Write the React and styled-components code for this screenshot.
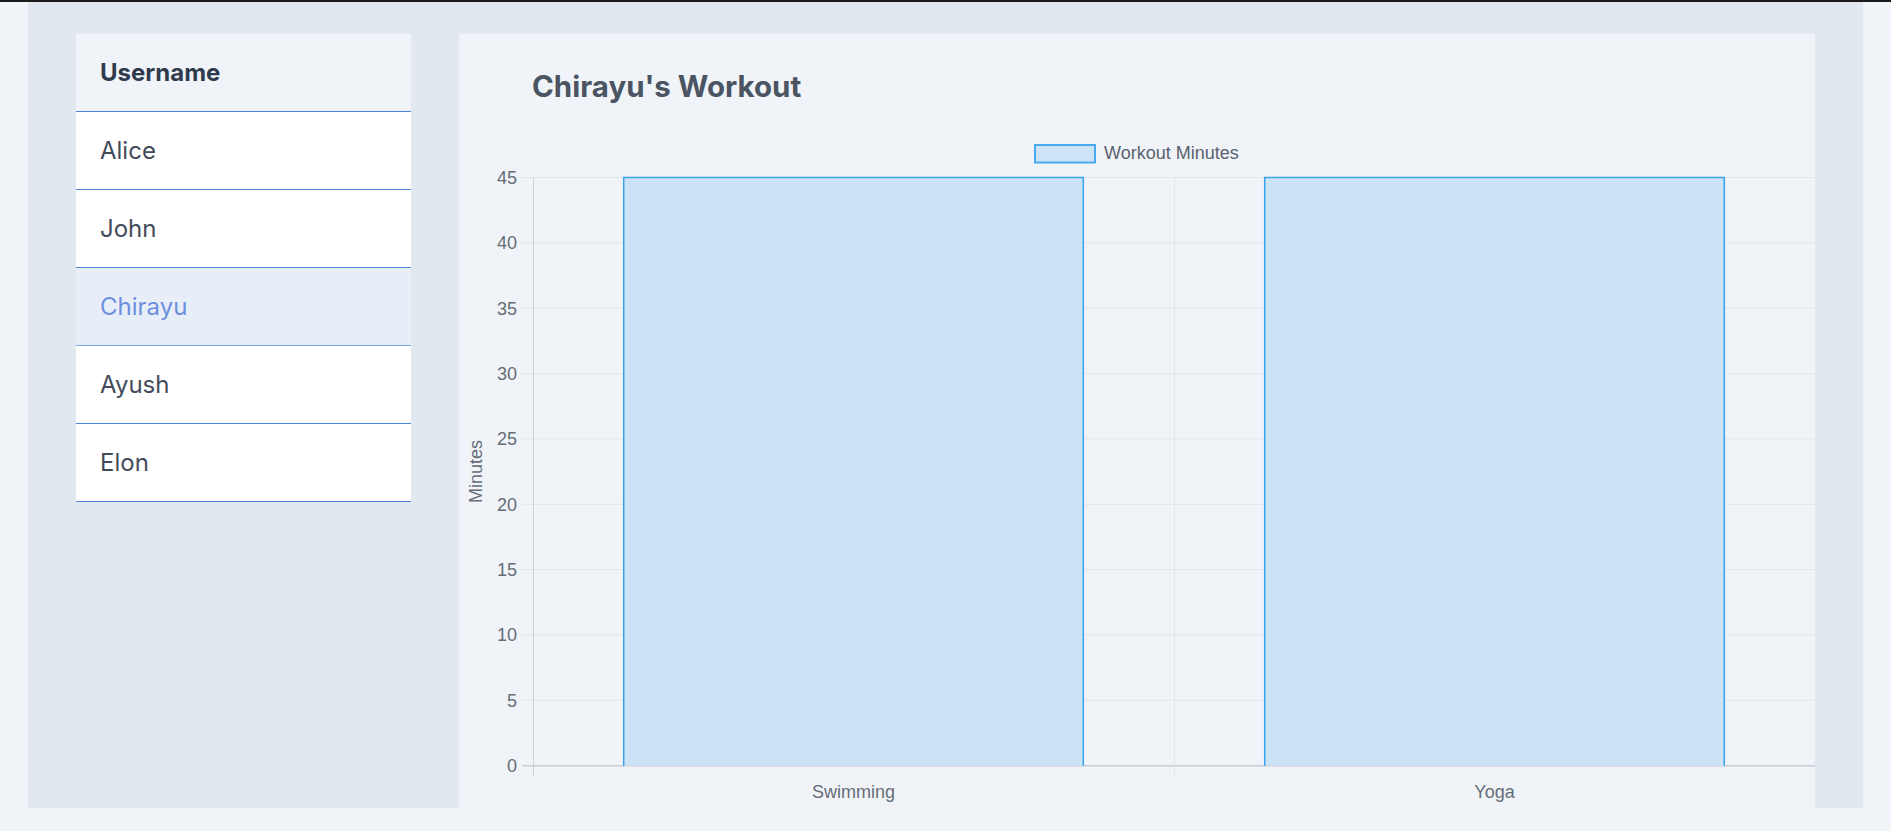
import styled, { createGlobalStyle } from 'styled-components'

const GlobalStyle = createGlobalStyle`
  html {
    border-top: 2px solid #1b1b1b;
  }
  body {
    margin: 0;
    background: #f0f4f8;
    font-family: Inter, 'Noto Sans', sans-serif;
  }
`

const Page = styled.div`
  padding: 0 28px;
`
const Container = styled.div`
  box-sizing: border-box;
  height: 97vh;
  background: #e2e8f0;
  padding: 32px 48px;
  display: flex;
  align-items: flex-start;
  gap: 48px;
`
const Sidebar = styled.div`
  width: 335px;
  flex: none;
  display: flex;
  flex-direction: column;
`
const HeaderRow = styled.div`
  padding: 24px;
  background: #f0f4f8;
  border-bottom: 1px solid #4a84dd;
  font-size: 24px;
  font-weight: 700;
  color: #2f3a4c;
`
const UserRow = styled.div`
  padding: 24px;
  background: ${(props) => (props.active ? '#e8eef8' : '#ffffff')};
  border-bottom: 1px solid ${(props) => (props.active ? '#7ba3ea' : '#4a84dd')};
  font-size: 24px;
  color: ${(props) => (props.active ? '#6d8fdf' : '#434b5a')};
  cursor: pointer;
`
const ChartCard = styled.div`
  flex: 1;
  min-width: 0;
  background: #f0f4f8;
  overflow: hidden;
  padding-top: 34px;
`
const Title = styled.h2`
  margin: 0 0 6px 73px;
  font-size: 29.5px;
  font-weight: 700;
  color: #4a5463;
`
const ChartSvg = styled.svg`
  display: block;
  font-family: 'Liberation Sans', Arial, sans-serif;
`

const users = ['Alice', 'John', 'Chirayu', 'Ayush', 'Elon']
const workouts = [
  { label: 'Swimming', minutes: 45 },
  { label: 'Yoga', minutes: 45 },
]

const AXIS_X = 74
const RIGHT = 1356
const TOP = 67.5
const BOTTOM = 655.7
const MAX = 45

function WorkoutChart({ data }) {
  const yFor = (v) => BOTTOM - ((BOTTOM - TOP) * v) / MAX
  const ticks = [0, 5, 10, 15, 20, 25, 30, 35, 40, 45]
  const catW = (RIGHT - AXIS_X) / data.length
  const barW = catW * 0.717

  return (
    <ChartSvg width="1356" height="700" viewBox="0 0 1356 700">
      {/* legend */}
      <rect x="576" y="35" width="60" height="17.5" fill="#cde3f6" stroke="#4aaaee" strokeWidth="2" />
      <text x="645" y="49" fontSize="18" fill="#5a6270">
        Workout Minutes
      </text>

      {/* grid */}
      {ticks.map((t) => (
        <g key={t}>
          <line x1={AXIS_X - 11} x2={RIGHT} y1={yFor(t)} y2={yFor(t)} stroke={t === 0 ? '#c8ccd3' : '#e0e5ea'} strokeWidth={t === 0 ? 1.5 : 1} />
          <text x="58" y={yFor(t) + 6.5} fontSize="18" fill="#666c76" textAnchor="end">
            {t}
          </text>
        </g>
      ))}
      {data.map((d, i) => (
        <line key={d.label} x1={AXIS_X + catW * i + 0.5} x2={AXIS_X + catW * i + 0.5} y1={TOP} y2={BOTTOM + 11} stroke={i === 0 ? '#cdd1d7' : '#e0e5ea'} strokeWidth="1" />
      ))}

      {/* bars */}
      {data.map((d, i) => {
        const cx = AXIS_X + catW * (i + 0.5)
        const x = cx - barW / 2
        const y = yFor(d.minutes)
        return (
          <g key={d.label}>
            <rect x={x} y={y} width={barW} height={BOTTOM - y} fill="#cce3f6" />
            <path d={`M${x} ${BOTTOM} V${y} H${x + barW} V${BOTTOM}`} fill="none" stroke="#36a2eb" strokeWidth="1.5" />
            <text x={cx} y={BOTTOM + 32.5} fontSize="18" fill="#666c76" textAnchor="middle">
              {d.label}
            </text>
          </g>
        )
      })}

      <text x="0" y="0" fontSize="18" fill="#666c76" textAnchor="middle" transform="translate(22.5 361.6) rotate(-90)">
        Minutes
      </text>
    </ChartSvg>
  )
}

function App() {
  const selected = 'Chirayu'
  return (
    <Page>
      <GlobalStyle />
      <Container>
        <Sidebar>
          <HeaderRow>Username</HeaderRow>
          {users.map((u) => (
            <UserRow key={u} active={u === selected}>
              {u}
            </UserRow>
          ))}
        </Sidebar>
        <ChartCard>
          <Title>{selected}'s Workout</Title>
          <WorkoutChart data={workouts} />
        </ChartCard>
      </Container>
    </Page>
  )
}

export default App
